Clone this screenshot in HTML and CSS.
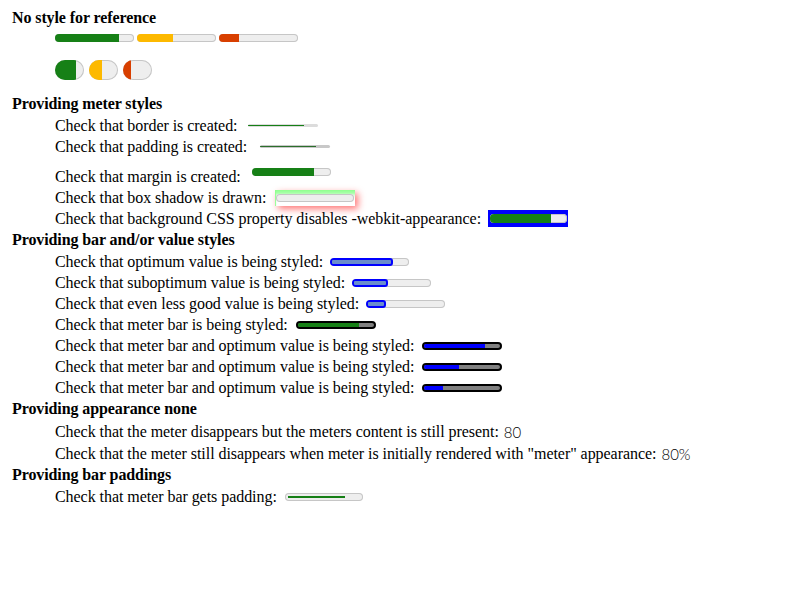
FILE: index.html
```html
<!DOCTYPE html>
<html>
<head>
<meta charset="utf-8">
<link rel="stylesheet" href="styles.css">
</head>
<body>
<div class="page">
  <div class="h first">No style for reference</div>
  <div class="refbars">
    <span class="m std"><span class="f green" style="width:81%"></span></span>
    <span class="m std"><span class="f yellow" style="width:45%"></span></span>
    <span class="m std"><span class="f red" style="width:25%"></span></span>
  </div>
  <div class="refpills">
    <span class="m pill"><span class="f green" style="width:74%"></span></span>
    <span class="m pill"><span class="f yellow" style="width:44%"></span></span>
    <span class="m pill"><span class="f red" style="width:26%"></span></span>
  </div>

  <div class="h">Providing meter styles</div>
  <div class="row"><span class="t">Check that border is created:</span><span class="m thin g11"><span class="f green" style="width:80%"></span></span></div>
  <div class="row"><span class="t">Check that padding is created:</span><span class="m thin dark g13"><span class="f dgreen" style="width:79%"></span></span></div>
  <div class="row tall"><span class="t">Check that margin is created:</span><span class="m std g11 raised"><span class="f green" style="width:79%"></span></span></div>
  <div class="row"><span class="t">Check that box shadow is drawn:</span><span class="shadowbox g9"><span class="m std full"></span></span></div>
  <div class="row"><span class="t">Check that background CSS property disables -webkit-appearance:</span><span class="bluebox g7"><span class="m std full tall9"><span class="f green" style="width:79%"></span></span></span></div>

  <div class="h">Providing bar and/or value styles</div>
  <div class="row"><span class="t">Check that optimum value is being styled:</span><span class="m std g7"><span class="f ovalue" style="width:80%"></span></span></div>
  <div class="row"><span class="t">Check that suboptimum value is being styled:</span><span class="m std g7"><span class="f ovalue" style="width:45%"></span></span></div>
  <div class="row"><span class="t">Check that even less good value is being styled:</span><span class="m std g7"><span class="f ovalue" style="width:25%"></span></span></div>
  <div class="row"><span class="t">Check that meter bar is being styled:</span><span class="m bb g8"><span class="f green" style="width:80%"></span></span></div>
  <div class="row"><span class="t">Check that meter bar and optimum value is being styled:</span><span class="m bb g8"><span class="f blue" style="width:80%"></span></span></div>
  <div class="row"><span class="t">Check that meter bar and optimum value is being styled:</span><span class="m bb g8"><span class="f blue" style="width:45%"></span></span></div>
  <div class="row"><span class="t">Check that meter bar and optimum value is being styled:</span><span class="m bb g8"><span class="f blue" style="width:25%"></span></span></div>

  <div class="h">Providing appearance none</div>
  <div class="row r22"><span class="t">Check that the meter disappears but the meters content is still present:</span><span class="val">80</span></div>
  <div class="row r22"><span class="t">Check that the meter still disappears when meter is initially rendered with "meter" appearance:</span><span class="val">80%</span></div>

  <div class="h">Providing bar paddings</div>
  <div class="row"><span class="t">Check that meter bar gets padding:</span><span class="m padm g8"><span class="f green" style="width:80%"></span></span></div>
</div>
</body>
</html>
```
FILE: styles.css
```css
html, body {
  margin: 0;
  padding: 0;
  background: #fff;
}
body {
  font-family: "Liberation Serif", "Times New Roman", serif;
  font-size: 16px;
  letter-spacing: -0.05px;
  color: #000;
}
.page {
  padding-top: 5px;
}
.h {
  font-weight: bold;
  height: 22px;
  line-height: 22px;
  padding-left: 12px;
  white-space: nowrap;
  letter-spacing: -0.1px;
}
.h.first {
  padding-top: 2px;
  height: 19px;
  line-height: 21px;
}
.refbars {
  display: flex;
  gap: 3px;
  padding: 8px 0 0 55px;
  height: 16px;
}
.refpills {
  display: flex;
  gap: 5px;
  padding: 10px 0 0 55px;
  height: 20px;
  margin-bottom: 13px;
}
.row {
  display: flex;
  align-items: center;
  height: 21px;
  padding-left: 55px;
  white-space: nowrap;
}
.row.tall {
  height: 30px;
  align-items: flex-end;
}
.row.r22 {
  height: 22px;
}
.t {
  line-height: 21px;
}
.m {
  display: block;
  position: relative;
  overflow: hidden;
  flex: none;
  box-sizing: border-box;
}
.f {
  display: block;
  height: 100%;
}
.std {
  width: 79px;
  height: 8px;
  background: #eeeeee;
  box-shadow: inset 0 0 0 1px #c6c6c6;
  border-radius: 4px;
}
.pill {
  width: 29px;
  height: 20px;
  background: #eeeeee;
  box-shadow: inset 0 0 0 1px #c6c6c6;
  border-radius: 10px;
}
.green { background: #168016; }
.dgreen { background: #2b6e2b; }
.yellow { background: #fdb900; }
.red { background: #d83f00; }
.blue { background: #0000ff; }

.thin {
  width: 70px;
  height: 3px;
  background: #dcdcdc;
  border-radius: 2px;
  padding: 1px 0 0 0;
}
.thin .f {
  height: 1px;
}
.thin.dark {
  background: #c8c8c8;
}
.raised {
  align-self: flex-start;
  margin-top: 11px;
}
.shadowbox {
  display: block;
  flex: none;
  width: 80px;
  height: 16px;
  box-sizing: border-box;
  padding: 4px 1px 4px 1px;
  background: linear-gradient(to bottom, #90ff90 0, #a8ffa8 3px, #e8ffe8 6px, #ffffff 9px);
  box-shadow: inset 2px 0 1px -1px #90ff90, 3px 3px 7px rgba(255, 30, 30, 0.6);
}
.full {
  width: 100%;
  height: 8px;
}
.bluebox {
  display: block;
  flex: none;
  width: 80px;
  height: 17px;
  box-sizing: border-box;
  padding: 4px 1px 4px 2px;
  background: #0000ff;
}
.tall9 {
  height: 9px;
}
.ovalue {
  background: #6a8dcc;
  border: 2px solid #0000ff;
  border-radius: 3px;
  box-sizing: border-box;
}
.bb {
  width: 80px;
  height: 8px;
  border: 2px solid #000;
  border-radius: 4px;
  background: #808080;
}
.padm {
  width: 78px;
  height: 8px;
  padding: 3px;
  background: #eeeeee;
  box-shadow: inset 0 0 0 1px #c6c6c6;
  border-radius: 4px;
}
.val {
  font-family: Lato, "DejaVu Sans", sans-serif;
  font-weight: 300;
  font-size: 15px;
  letter-spacing: 0;
  margin-left: 5px;
  line-height: 22px;
  position: relative;
  top: 1px;
}
.g6 { margin-left: 6px; }
.g7 { margin-left: 7px; }
.g8 { margin-left: 8px; }
.g9 { margin-left: 9px; }
.g11 { margin-left: 11px; }
.g13 { margin-left: 13px; }
```
